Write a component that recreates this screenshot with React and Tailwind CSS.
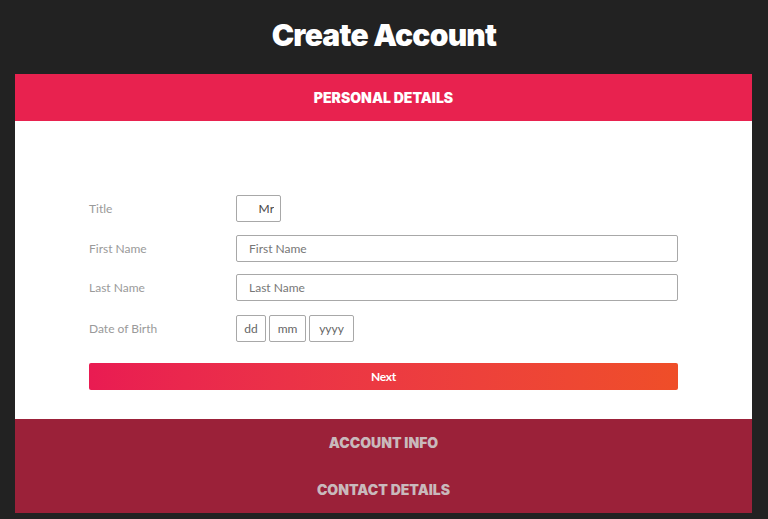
import React, { useState } from 'react';

function App() {
  const [title, setTitle] = useState('Mr');
  const [firstName, setFirstName] = useState('');
  const [lastName, setLastName] = useState('');

  return (
    <div className="min-h-screen w-full bg-[#222222] font-['Lato',sans-serif]">
      {/* Heading */}
      <div className="h-[74px] flex items-center justify-center">
        <h1 className="text-[30px] font-black text-white tracking-tight font-['Inter',sans-serif] -mt-[4px]">
          Create Account
        </h1>
      </div>

      {/* Card */}
      <div className="mx-[15px] w-[737px]">
        <div className="h-[47px] bg-[#e8224f] flex items-center justify-center">
          <span className="text-[14px] font-black text-white uppercase font-['Inter',sans-serif]">
            Personal Details
          </span>
        </div>

        <div className="bg-white px-[74px] pt-[74px] pb-[29px]">
          <div className="flex flex-col">
            <div className="flex items-center h-[27px]">
              <label className="w-[147px] text-[12px] text-[#9a9a9a]">Title</label>
              <input
                value={title}
                onChange={e => setTitle(e.target.value)}
                className="w-[45px] h-[27px] border border-[#a8a8a8] rounded-[2px] text-right pr-[6px] text-[12px] text-[#444] outline-none"
              />
            </div>
            <div className="flex items-center h-[27px] mt-[13px]">
              <label className="w-[147px] text-[12px] text-[#9a9a9a]">First Name</label>
              <input
                value={firstName}
                onChange={e => setFirstName(e.target.value)}
                placeholder="First Name"
                className="w-[442px] h-[27px] border border-[#a8a8a8] rounded-[2px] px-[12px] text-[12px] text-[#444] placeholder:text-[#777] outline-none"
              />
            </div>
            <div className="flex items-center h-[27px] mt-[12px]">
              <label className="w-[147px] text-[12px] text-[#9a9a9a]">Last Name</label>
              <input
                value={lastName}
                onChange={e => setLastName(e.target.value)}
                placeholder="Last Name"
                className="w-[442px] h-[27px] border border-[#a8a8a8] rounded-[2px] px-[12px] text-[12px] text-[#444] placeholder:text-[#777] outline-none"
              />
            </div>
            <div className="flex items-center h-[27px] mt-[14px]">
              <label className="w-[147px] text-[12px] text-[#9a9a9a]">Date of Birth</label>
              <div className="flex gap-[3px]">
                <input placeholder="dd" className="w-[30px] h-[27px] border border-[#a8a8a8] rounded-[2px] text-center text-[12px] placeholder:text-[#666] outline-none" />
                <input placeholder="mm" className="w-[37px] h-[27px] border border-[#a8a8a8] rounded-[2px] text-center text-[12px] placeholder:text-[#666] outline-none" />
                <input placeholder="yyyy" className="w-[45px] h-[27px] border border-[#a8a8a8] rounded-[2px] text-center text-[12px] placeholder:text-[#666] outline-none" />
              </div>
            </div>

            <button className="mt-[21px] w-[589px] h-[27px] rounded-[2px] bg-gradient-to-r from-[#e91b52] to-[#ef4e28] text-white text-[12px] font-bold tracking-tight">
              Next
            </button>
          </div>
        </div>

        <div className="bg-[#9b2139]">
          <div className="h-[47px] flex items-center justify-center">
            <span className="text-[14px] font-black text-[#c9b9bc] uppercase font-['Inter',sans-serif]">
              Account Info
            </span>
          </div>
          <div className="h-[47px] flex items-center justify-center">
            <span className="text-[14px] font-black text-[#c9b9bc] uppercase font-['Inter',sans-serif]">
              Contact Details
            </span>
          </div>
        </div>
      </div>
    </div>
  );
}

export default App;
